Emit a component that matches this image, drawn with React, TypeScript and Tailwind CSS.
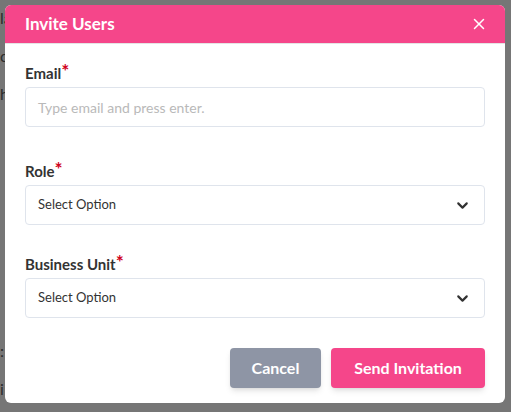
import { ChevronDown, X } from "lucide-react";

const font = { fontFamily: '"Source Sans Pro", Lato, "Liberation Sans", sans-serif' };

function Label({ text }: { text: string }) {
  return (
    <div className="text-[15px] font-bold text-[#333] leading-5 flex items-start">
      {text}
      <span className="text-[#d0021b] text-[19px] leading-[16px] font-bold">*</span>
    </div>
  );
}

function SelectBox() {
  return (
    <div className="h-10 rounded-[4px] border border-[#dfe4ec] bg-white flex items-center justify-between pl-3 pr-[13px]">
      <span className="text-[13px] text-[#333]">Select Option</span>
      <ChevronDown className="w-[17px] h-[17px] text-[#333]" strokeWidth={3} />
    </div>
  );
}

export default function App() {
  return (
    <div className="relative w-[511px] h-[412px] bg-[#767676] overflow-hidden" style={font}>
      {/* page behind the overlay */}
      <div className="flex flex-col text-[16px] text-[#2c2c2c] leading-5">
        <span className="mt-[8px]">la</span>
        <span className="mt-[18px]">c</span>
        <span className="mt-[18px]">h</span>
        <span className="mt-[237px]">:</span>
        <span className="mt-[18px]">i</span>
      </div>

      {/* modal */}
      <div className="absolute left-[5px] top-[5px] w-[500px] h-[398px] bg-white rounded-md overflow-hidden flex flex-col">
        <div className="h-[39px] bg-[#f5468a] border-b border-[#e4e4e4] flex items-center justify-between pl-5 pr-[17px]">
          <span className="text-white text-[17px] font-bold">Invite Users</span>
          <X className="w-[18px] h-[18px] text-white" strokeWidth={2} />
        </div>

        <div className="flex flex-col px-5 pt-[19px]">
          <Label text="Email" />
          <div className="mt-1 h-10 rounded-[4px] border border-[#dfe4ec] flex items-center pl-3">
            <span className="text-[14px] text-[#b9b9b9]">Type email and press enter.</span>
          </div>

          <div className="mt-[34px]">
            <Label text="Role" />
          </div>
          <div className="mt-1">
            <SelectBox />
          </div>

          <div className="mt-[29px]">
            <Label text="Business Unit" />
          </div>
          <div className="mt-1">
            <SelectBox />
          </div>

          <div className="flex justify-end gap-[10px] mt-[30px]">
            <button className="w-[91px] h-10 rounded-[4px] bg-[#8e95a5] text-white text-[16px] font-bold shadow-md">
              Cancel
            </button>
            <button className="w-[154px] h-10 rounded-[4px] bg-[#f5468a] text-white text-[16px] font-bold shadow-md">
              Send Invitation
            </button>
          </div>
        </div>
      </div>
    </div>
  );
}
